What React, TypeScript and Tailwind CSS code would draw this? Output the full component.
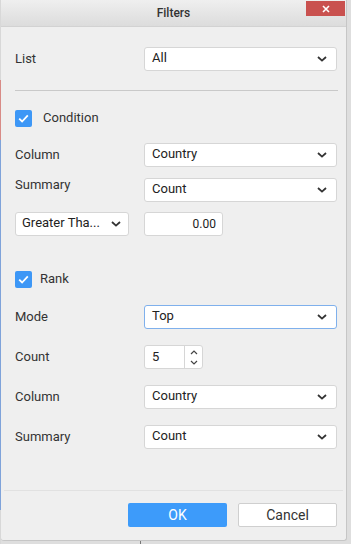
import React from "react";

const Chevron = ({ className = "" }: { className?: string }) => (
  <svg width="10" height="6" viewBox="0 0 10 6" className={className}>
    <path d="M1 1l4 3.6L9 1" fill="none" stroke="#333" strokeWidth="1.8" />
  </svg>
);

const Check = () => (
  <span className="flex h-[17px] w-[17px] items-center justify-center rounded-[2px] bg-[#3d97f6]">
    <svg width="11" height="9" viewBox="0 0 11 9">
      <path d="M1.2 4.6l2.9 2.9L9.8 1.4" fill="none" stroke="#fff" strokeWidth="1.8" />
    </svg>
  </span>
);

function Select({ value, focused = false }: { value: string; focused?: boolean }) {
  return (
    <div
      className={
        focused
          ? "flex h-[24px] w-[193px] items-center justify-between rounded-[3px] border border-[#7fb0ec] bg-white pl-[7px] pr-[9px]"
          : "flex h-[24px] w-[193px] items-center justify-between rounded-[3px] border border-[#d6d6d6] bg-white pl-[7px] pr-[9px]"
      }
    >
      <span className="pb-[2px] text-[13px] text-[#222]">{value}</span>
      <Chevron />
    </div>
  );
}

function Row({ label, children, top = false }: { label: string; children: React.ReactNode; top?: boolean }) {
  return (
    <div className={top ? "flex h-[24px] items-start" : "flex h-[24px] items-center"}>
      <span className={top ? "-mt-[3px] w-[129px] text-[13px] text-[#333]" : "w-[129px] text-[13px] text-[#333]"}>
        {label}
      </span>
      {children}
    </div>
  );
}

export default function App() {
  return (
    <div
      className="relative flex h-[544px] w-[351px] bg-[#dedede]"
      style={{ fontFamily: "Roboto, 'Noto Sans', Arial, sans-serif" }}
    >
      {/* page behind the dialog */}
      <div className="flex w-[1px] flex-col">
        <div className="h-[80px] bg-[#d8d8d8]" />
        <div className="h-[60px] bg-[#d88b86]" />
        <div className="h-[370px] bg-[#7fa3da]" />
        <div className="flex-1 bg-[#d8d8d8]" />
      </div>
      <div className="absolute bottom-0 left-[140px] h-[3px] w-[1px] bg-[#777]" />

      <div className="relative flex h-[541px] w-[346px] flex-col overflow-hidden rounded-b-[3px] border-r border-b border-[#c6c6c6] bg-[#efefef]">
        {/* title bar */}
        <div className="relative flex h-[27px] shrink-0 items-center justify-center border-b border-[#d2d2d2] bg-gradient-to-b from-[#efefef] to-[#dcdcdc]">
          <span className="text-[12px] font-medium text-[#333]">Filters</span>
          <div className="absolute right-[1px] top-[1px] flex h-[15px] w-[39px] items-center justify-center bg-[#c9514f]">
            <svg width="8" height="8" viewBox="0 0 8 8">
              <path d="M1 1l6 6M7 1L1 7" stroke="#fff" strokeWidth="1.6" />
            </svg>
          </div>
        </div>

        <div className="flex flex-1 flex-col pl-[14px]">
          <div className="mt-[20px]">
            <Row label="List">
              <Select value="All" />
            </Row>
          </div>
          <div className="mt-[19px] h-[1px] w-[323px] bg-[#c9c9c9]" />

          <div className="mt-[19px] flex h-[17px] items-center gap-[11px]">
            <Check />
            <span className="pb-[2px] text-[13px] leading-none text-[#333]">Condition</span>
          </div>
          <div className="mt-[16px]">
            <Row label="Column">
              <Select value="Country" />
            </Row>
          </div>
          <div className="mt-[11px]">
            <Row label="Summary" top>
              <Select value="Count" />
            </Row>
          </div>
          <div className="mt-[10px] flex h-[24px] items-center">
            <div className="flex h-[24px] w-[114px] items-center justify-between rounded-[3px] border border-[#d6d6d6] bg-white pl-[6px] pr-[7px]">
              <span className="pb-[2px] text-[13px] text-[#222]">Greater Tha...</span>
              <Chevron />
            </div>
            <div className="ml-[15px] flex h-[24px] w-[79px] items-center justify-end rounded-[3px] border border-[#d6d6d6] bg-white pr-[6px]">
              <span className="pb-[1px] text-[12px] text-[#222]">0.00</span>
            </div>
          </div>

          <div className="mt-[35px] flex h-[17px] items-center gap-[8px]">
            <Check />
            <span className="pb-[2px] text-[13px] leading-none text-[#333]">Rank</span>
          </div>
          <div className="mt-[17px]">
            <Row label="Mode">
              <Select value="Top" focused />
            </Row>
          </div>
          <div className="mt-[16px]">
            <Row label="Count">
              <div className="flex h-[24px] w-[59px] rounded-[3px] border border-[#d6d6d6] bg-white">
                <span className="flex flex-1 items-center pl-[7px] text-[13px] text-[#222]">5</span>
                <div className="flex w-[18px] flex-col items-center justify-center gap-[5px] border-l border-[#d6d6d6]">
                  <svg width="8" height="5" viewBox="0 0 8 5">
                    <path d="M1 4l3-3 3 3" fill="none" stroke="#444" strokeWidth="1.2" />
                  </svg>
                  <svg width="8" height="5" viewBox="0 0 8 5">
                    <path d="M1 1l3 3 3-3" fill="none" stroke="#444" strokeWidth="1.2" />
                  </svg>
                </div>
              </div>
            </Row>
          </div>
          <div className="mt-[16px]">
            <Row label="Column">
              <Select value="Country" />
            </Row>
          </div>
          <div className="mt-[16px]">
            <Row label="Summary">
              <Select value="Count" />
            </Row>
          </div>
        </div>

        {/* footer */}
        <div className="mx-[3px] h-[1px] bg-[#e1e1e1]" />
        <div className="flex h-[49px] items-start justify-end gap-[11px] pr-[9px] pt-[12px]">
          <button className="h-[24px] w-[99px] rounded-[2px] bg-[#3d9bfa] text-[14px] text-white">OK</button>
          <button className="h-[24px] w-[99px] rounded-[2px] border border-[#cfcfcf] bg-white text-[14px] text-[#333]">
            Cancel
          </button>
        </div>
      </div>
    </div>
  );
}
